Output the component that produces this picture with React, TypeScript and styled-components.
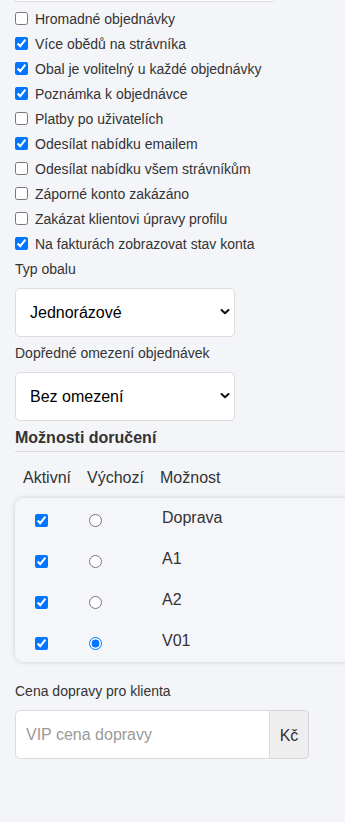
import React from "react";
import styled, { createGlobalStyle } from "styled-components";

const Global = createGlobalStyle`
  html, body { margin: 0; padding: 0; background: #f4f5f9; }
  body { font-family: "Liberation Sans", Arial, sans-serif; color: #333; overflow: hidden; }
  * { box-sizing: border-box; }
`;

const Page = styled.div`
  padding: 0 0 0 15px;
  width: 345px;
  height: 822px;
  overflow: hidden;
`;

const TopField = styled.div`
  width: 259px;
  height: 2px;
  border: 1px solid #dcdcdc;
  border-top: none;
  border-radius: 0 0 6px 6px;
  background: #fff;
`;

const OptionList = styled.div`
  margin-top: 4px;
  display: flex;
  flex-direction: column;
`;

const OptionRow = styled.label`
  height: 25px;
  display: flex;
  align-items: center;
  gap: 7px;
  font-size: 14px;
  color: #333;
`;

const Check = styled.input`
  width: 13px;
  height: 13px;
  margin: 0;
  flex: none;
`;

const FieldLabel = styled.div<{ $top: number }>`
  margin-top: ${(p) => p.$top}px;
  margin-bottom: 9px;
  line-height: 20px;
  font-size: 14px;
  color: #333;
`;

const SelectWrap = styled.div`
  position: relative;
  width: 220px;
  height: 49px;
`;

const Select = styled.select`
  appearance: none;
  -webkit-appearance: none;
  display: block;
  width: 100%;
  height: 100%;
  padding: 0 30px 0 14px;
  font-family: "Liberation Sans", Arial, sans-serif;
  font-size: 16px;
  color: #000;
  background: #fff;
  border: 1px solid #dcdcdc;
  border-radius: 5px;
  outline: none;
`;

const Chevron = styled.svg`
  position: absolute;
  right: 5px;
  top: 20px;
  width: 10px;
  height: 8px;
  pointer-events: none;
`;

const SectionTitle = styled.h3`
  margin: 7px 0 0;
  padding-bottom: 3px;
  border-bottom: 1px solid #dcdcdc;
  font-size: 16px;
  line-height: 20px;
  font-weight: bold;
  color: #333;
`;

const Columns = "64px 73px 1fr";

const TableHead = styled.div`
  margin-top: 16px;
  display: grid;
  grid-template-columns: ${Columns};
  padding-left: 8px;
  font-size: 16px;
  line-height: 20px;
  color: #333;
`;

const Card = styled.div`
  margin-top: 10px;
  margin-right: -20px;
  background: #f5f6fa;
  border-radius: 8px;
  box-shadow: 0 0 5px rgba(0, 0, 0, 0.16);
`;

const TableRow = styled.div`
  height: 41px;
  display: grid;
  grid-template-columns: ${Columns};
  align-items: center;
  padding-left: 8px;
`;

const Cell = styled.div<{ $indent: number; $shift: number }>`
  padding-left: ${(p) => p.$indent}px;
  margin-top: ${(p) => p.$shift}px;
  display: flex;
  align-items: center;
`;

const OptionName = styled.div`
  padding-left: 2px;
  margin-top: -2px;
  font-size: 16px;
  line-height: 20px;
  color: #333;
`;

const InputGroup = styled.div`
  display: flex;
  width: 294px;
  height: 49px;
`;

const TextInput = styled.input`
  width: 255px;
  height: 100%;
  padding: 0 10px;
  font-family: "Liberation Sans", Arial, sans-serif;
  font-size: 16px;
  color: #333;
  background: #fff;
  border: 1px solid #dcdcdc;
  border-radius: 5px 0 0 5px;
  outline: none;
  &::placeholder { color: #9a9a9a; }
`;

const Addon = styled.div`
  width: 39px;
  height: 100%;
  display: flex;
  align-items: center;
  justify-content: center;
  padding-top: 3px;
  font-size: 16px;
  color: #333;
  background: #eeeeee;
  border: 1px solid #d4d4d4;
  border-left: none;
  border-radius: 0 5px 5px 0;
`;

const options: [string, boolean][] = [
  ["Hromadné objednávky", false],
  ["Více obědů na strávníka", true],
  ["Obal je volitelný u každé objednávky", true],
  ["Poznámka k objednávce", true],
  ["Platby po uživatelích", false],
  ["Odesílat nabídku emailem", true],
  ["Odesílat nabídku všem strávníkům", false],
  ["Záporné konto zakázáno", false],
  ["Zakázat klientovi úpravy profilu", false],
  ["Na fakturách zobrazovat stav konta", true],
];

const delivery: [string, boolean][] = [
  ["Doprava", false],
  ["A1", false],
  ["A2", false],
  ["V01", true],
];

function Dropdown({ value, items }: { value: string; items: string[] }) {
  return (
    <SelectWrap>
      <Select defaultValue={value}>
        {items.map((i) => (
          <option key={i} value={i}>
            {i}
          </option>
        ))}
      </Select>
      <Chevron viewBox="0 0 10 8">
        <path d="M1.5 2 L5 5.3 L8.5 2" fill="none" stroke="#111" strokeWidth="2" strokeLinecap="round" strokeLinejoin="round" />
      </Chevron>
    </SelectWrap>
  );
}

export default function App() {
  return (
    <Page>
      <Global />
      <TopField />
      <OptionList>
        {options.map(([label, checked]) => (
          <OptionRow key={label}>
            <Check type="checkbox" defaultChecked={checked} />
            {label}
          </OptionRow>
        ))}
      </OptionList>

      <FieldLabel $top={3}>Typ obalu</FieldLabel>
      <Dropdown value="Jednorázové" items={["Jednorázové", "Vratné"]} />

      <FieldLabel $top={6}>Dopředné omezení objednávek</FieldLabel>
      <Dropdown value="Bez omezení" items={["Bez omezení"]} />

      <SectionTitle>Možnosti doručení</SectionTitle>
      <TableHead>
        <div>Aktivní</div>
        <div>Výchozí</div>
        <div>Možnost</div>
      </TableHead>
      <Card>
        {delivery.map(([name, def]) => (
          <TableRow key={name}>
            <Cell $indent={12} $shift={3}>
              <Check type="checkbox" defaultChecked />
            </Cell>
            <Cell $indent={2} $shift={3}>
              <Check type="radio" name="default" defaultChecked={def} />
            </Cell>
            <OptionName>{name}</OptionName>
          </TableRow>
        ))}
      </Card>

      <FieldLabel $top={19}>Cena dopravy pro klienta</FieldLabel>
      <InputGroup>
        <TextInput placeholder="VIP cena dopravy" />
        <Addon>Kč</Addon>
      </InputGroup>
    </Page>
  );
}
